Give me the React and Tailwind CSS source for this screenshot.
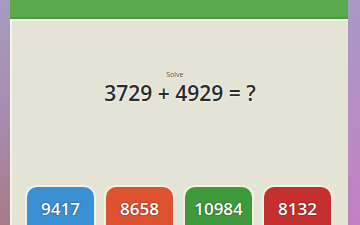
export default function App() {
  const answers = [
    { value: "9417", color: "bg-[#3b8fd4]" },
    { value: "8658", color: "bg-[#df5230]" },
    { value: "10984", color: "bg-[#3f9a3b]" },
    { value: "8132", color: "bg-[#c5302f]" },
  ];

  return (
    <div
      className="w-[360px] h-[225px] overflow-hidden flex bg-gradient-to-b from-[#a79ac0] via-[#a88cb0] to-[#a87a88]"
      style={{ fontFamily: '"Open Sans", "DejaVu Sans", sans-serif' }}
    >
      <div className="w-[10px] shrink-0" />
      <div className="w-[338px] shrink-0 flex flex-col min-h-0">
        <div className="h-[19px] shrink-0 bg-[#5ba84f] border-b-2 border-[#4a9a40] flex justify-center overflow-hidden">
          <span className="text-white text-[15px] leading-none -mt-[17px]">Quick guy,</span>
        </div>
        <div className="flex-1 min-h-0 overflow-hidden bg-[#e3e3d6] border-t-2 border-l-2 border-[#f4f4ea] flex flex-col items-center">
          <div className="mt-[62px] shrink-0 relative text-[#2a2a2a] text-[21px] font-semibold leading-none [text-shadow:0_0_2px_#fff,0_0_2px_#fff]">
            <span className="absolute left-[62px] -top-[12px] text-[7px] leading-none font-normal text-[#444]">Solve</span>
            3729 + 4929 = ?
          </div>
          <div className="mt-[83px] shrink-0 flex gap-[12px] -ml-[2px]">
            {answers.map((a) => (
              <div
                key={a.value}
                className={`w-[67px] h-[48px] shrink-0 rounded-[10px] ${a.color} ring-2 ring-[#f2f1e4] flex justify-center pt-[13px]`}
              >
                <span className="text-white text-[17px] font-semibold leading-none [text-shadow:0_0_2px_rgba(0,0,0,0.6)]">
                  {a.value}
                </span>
              </div>
            ))}
          </div>
        </div>
      </div>
      <div className="flex-1 bg-gradient-to-b from-[#a898c4] to-[#c380c4]" />
    </div>
  );
}
